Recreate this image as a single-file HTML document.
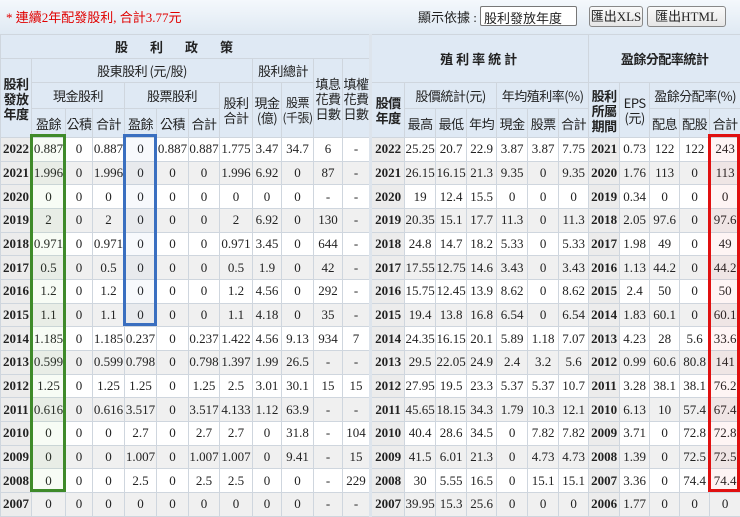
<!DOCTYPE html>
<html><head><meta charset="utf-8">
<style>
*{margin:0;padding:0;box-sizing:border-box}
body{width:740px;height:513px;overflow:hidden;background:#e4edf6;font-family:"Liberation Serif","Noto Sans CJK TC",serif;font-size:13px;color:#222;position:relative}
.top{position:absolute;left:0;top:0;width:740px;height:34px;background:linear-gradient(#f4f8fc,#dfe9f3)}
.red{position:absolute;left:6px;top:7px;color:#e00000;font-size:13px;font-family:"Liberation Serif","Noto Sans CJK TC",serif}
.lbl{position:absolute;left:418px;top:7px;font-size:13px}
.sel{position:absolute;left:480px;top:6px;width:97px;height:20px;border:1px solid #777;background:#fff;font-size:13px;padding:1px 3px;border-radius:2px}
.btn{position:absolute;top:6px;height:21px;border:1px solid #888;background:linear-gradient(#fafafa,#e6e6e6);border-radius:3px;font-size:13px;text-align:center;line-height:19px}
table{position:absolute;left:0;top:34px;width:740px;border-collapse:collapse;table-layout:fixed}
td,th{border:1px solid #cfd6de;text-align:center;white-space:nowrap;overflow:hidden;padding:0;font-weight:normal}
th{background:#dfe9f4;font-family:"Noto Sans CJK TC","Liberation Serif",sans-serif;font-size:13px;line-height:15px;color:#222;overflow:visible;letter-spacing:-0.5px}
th.b{font-weight:bold}
tbody tr{height:23.67px}
tbody tr td{background:#fff}
tbody tr:nth-child(even) td{background:#f0f0f0}
td.y{font-weight:bold;background:#ececec!important}
.sep{border-left:3px solid #dde4ec}
.box{position:absolute;border:3px solid}
</style></head><body>
<div class="top"></div>
<div class="red">* 連續2年配發股利, 合計3.77元</div>
<div class="lbl">顯示依據 :</div>
<div class="sel">股利發放年度 <span style="font-size:10px">&#8964;</span></div>
<div class="btn" style="left:589px;width:54px">匯出XLS</div>
<div class="btn" style="left:647px;width:79px">匯出HTML</div>
<table>
<colgroup>
<col style="width:31px"><col style="width:34px"><col style="width:27px"><col style="width:32px"><col style="width:32px"><col style="width:32px"><col style="width:31px"><col style="width:33px"><col style="width:29px"><col style="width:32px"><col style="width:29px"><col style="width:28px">
<col style="width:34px"><col style="width:31px"><col style="width:31px"><col style="width:30px"><col style="width:31px"><col style="width:31px"><col style="width:30px"><col style="width:31px"><col style="width:30px"><col style="width:30px"><col style="width:30px"><col style="width:31px">
</colgroup>
<thead>
<tr style="height:24px"><th class="b" colspan="12" style="letter-spacing:22px">股利政策</th><th class="b sep" colspan="7" rowspan="2" style="letter-spacing:3px">殖利率統計</th><th class="b" colspan="5" rowspan="2">盈餘分配率統計</th></tr>
<tr style="height:24px"><th class="b" rowspan="3">股利<br>發放<br>年度</th><th colspan="7">股東股利 (元/股)</th><th colspan="2">股利總計</th><th rowspan="3">填息<br>花費<br>日數</th><th rowspan="3">填權<br>花費<br>日數</th></tr>
<tr style="height:26px"><th colspan="3">現金股利</th><th colspan="3">股票股利</th><th rowspan="2">股利<br>合計</th><th rowspan="2">現金<br>(億)</th><th rowspan="2" style="font-size:12px">股票<br>(千張)</th><th class="b sep" rowspan="2">股價<br>年度</th><th colspan="3">股價統計(元)</th><th colspan="3">年均殖利率(%)</th><th class="b" rowspan="2">股利<br>所屬<br>期間</th><th rowspan="2">EPS<br>(元)</th><th colspan="3">盈餘分配率(%)</th></tr>
<tr style="height:29px"><th>盈餘</th><th>公積</th><th>合計</th><th>盈餘</th><th>公積</th><th>合計</th><th>最高</th><th>最低</th><th>年均</th><th>現金</th><th>股票</th><th>合計</th><th>配息</th><th>配股</th><th>合計</th></tr>
</thead>
<tbody>
<tr><td class="y">2022</td><td>0.887</td><td>0</td><td>0.887</td><td>0</td><td>0.887</td><td>0.887</td><td>1.775</td><td>3.47</td><td>34.7</td><td>6</td><td>-</td><td class="y sep">2022</td><td>25.25</td><td>20.7</td><td>22.9</td><td>3.87</td><td>3.87</td><td>7.75</td><td class="y">2021</td><td>0.73</td><td>122</td><td>122</td><td>243</td></tr>
<tr><td class="y">2021</td><td>1.996</td><td>0</td><td>1.996</td><td>0</td><td>0</td><td>0</td><td>1.996</td><td>6.92</td><td>0</td><td>87</td><td>-</td><td class="y sep">2021</td><td>26.15</td><td>16.15</td><td>21.3</td><td>9.35</td><td>0</td><td>9.35</td><td class="y">2020</td><td>1.76</td><td>113</td><td>0</td><td>113</td></tr>
<tr><td class="y">2020</td><td>0</td><td>0</td><td>0</td><td>0</td><td>0</td><td>0</td><td>0</td><td>0</td><td>0</td><td>-</td><td>-</td><td class="y sep">2020</td><td>19</td><td>12.4</td><td>15.5</td><td>0</td><td>0</td><td>0</td><td class="y">2019</td><td>0.34</td><td>0</td><td>0</td><td>0</td></tr>
<tr><td class="y">2019</td><td>2</td><td>0</td><td>2</td><td>0</td><td>0</td><td>0</td><td>2</td><td>6.92</td><td>0</td><td>130</td><td>-</td><td class="y sep">2019</td><td>20.35</td><td>15.1</td><td>17.7</td><td>11.3</td><td>0</td><td>11.3</td><td class="y">2018</td><td>2.05</td><td>97.6</td><td>0</td><td>97.6</td></tr>
<tr><td class="y">2018</td><td>0.971</td><td>0</td><td>0.971</td><td>0</td><td>0</td><td>0</td><td>0.971</td><td>3.45</td><td>0</td><td>644</td><td>-</td><td class="y sep">2018</td><td>24.8</td><td>14.7</td><td>18.2</td><td>5.33</td><td>0</td><td>5.33</td><td class="y">2017</td><td>1.98</td><td>49</td><td>0</td><td>49</td></tr>
<tr><td class="y">2017</td><td>0.5</td><td>0</td><td>0.5</td><td>0</td><td>0</td><td>0</td><td>0.5</td><td>1.9</td><td>0</td><td>42</td><td>-</td><td class="y sep">2017</td><td>17.55</td><td>12.75</td><td>14.6</td><td>3.43</td><td>0</td><td>3.43</td><td class="y">2016</td><td>1.13</td><td>44.2</td><td>0</td><td>44.2</td></tr>
<tr><td class="y">2016</td><td>1.2</td><td>0</td><td>1.2</td><td>0</td><td>0</td><td>0</td><td>1.2</td><td>4.56</td><td>0</td><td>292</td><td>-</td><td class="y sep">2016</td><td>15.75</td><td>12.45</td><td>13.9</td><td>8.62</td><td>0</td><td>8.62</td><td class="y">2015</td><td>2.4</td><td>50</td><td>0</td><td>50</td></tr>
<tr><td class="y">2015</td><td>1.1</td><td>0</td><td>1.1</td><td>0</td><td>0</td><td>0</td><td>1.1</td><td>4.18</td><td>0</td><td>35</td><td>-</td><td class="y sep">2015</td><td>19.4</td><td>13.8</td><td>16.8</td><td>6.54</td><td>0</td><td>6.54</td><td class="y">2014</td><td>1.83</td><td>60.1</td><td>0</td><td>60.1</td></tr>
<tr><td class="y">2014</td><td>1.185</td><td>0</td><td>1.185</td><td>0.237</td><td>0</td><td>0.237</td><td>1.422</td><td>4.56</td><td>9.13</td><td>934</td><td>7</td><td class="y sep">2014</td><td>24.35</td><td>16.15</td><td>20.1</td><td>5.89</td><td>1.18</td><td>7.07</td><td class="y">2013</td><td>4.23</td><td>28</td><td>5.6</td><td>33.6</td></tr>
<tr><td class="y">2013</td><td>0.599</td><td>0</td><td>0.599</td><td>0.798</td><td>0</td><td>0.798</td><td>1.397</td><td>1.99</td><td>26.5</td><td>-</td><td>-</td><td class="y sep">2013</td><td>29.5</td><td>22.05</td><td>24.9</td><td>2.4</td><td>3.2</td><td>5.6</td><td class="y">2012</td><td>0.99</td><td>60.6</td><td>80.8</td><td>141</td></tr>
<tr><td class="y">2012</td><td>1.25</td><td>0</td><td>1.25</td><td>1.25</td><td>0</td><td>1.25</td><td>2.5</td><td>3.01</td><td>30.1</td><td>15</td><td>15</td><td class="y sep">2012</td><td>27.95</td><td>19.5</td><td>23.3</td><td>5.37</td><td>5.37</td><td>10.7</td><td class="y">2011</td><td>3.28</td><td>38.1</td><td>38.1</td><td>76.2</td></tr>
<tr><td class="y">2011</td><td>0.616</td><td>0</td><td>0.616</td><td>3.517</td><td>0</td><td>3.517</td><td>4.133</td><td>1.12</td><td>63.9</td><td>-</td><td>-</td><td class="y sep">2011</td><td>45.65</td><td>18.15</td><td>34.3</td><td>1.79</td><td>10.3</td><td>12.1</td><td class="y">2010</td><td>6.13</td><td>10</td><td>57.4</td><td>67.4</td></tr>
<tr><td class="y">2010</td><td>0</td><td>0</td><td>0</td><td>2.7</td><td>0</td><td>2.7</td><td>2.7</td><td>0</td><td>31.8</td><td>-</td><td>104</td><td class="y sep">2010</td><td>40.4</td><td>28.6</td><td>34.5</td><td>0</td><td>7.82</td><td>7.82</td><td class="y">2009</td><td>3.71</td><td>0</td><td>72.8</td><td>72.8</td></tr>
<tr><td class="y">2009</td><td>0</td><td>0</td><td>0</td><td>1.007</td><td>0</td><td>1.007</td><td>1.007</td><td>0</td><td>9.41</td><td>-</td><td>15</td><td class="y sep">2009</td><td>41.5</td><td>6.01</td><td>21.3</td><td>0</td><td>4.73</td><td>4.73</td><td class="y">2008</td><td>1.39</td><td>0</td><td>72.5</td><td>72.5</td></tr>
<tr><td class="y">2008</td><td>0</td><td>0</td><td>0</td><td>2.5</td><td>0</td><td>2.5</td><td>2.5</td><td>0</td><td>0</td><td>-</td><td>229</td><td class="y sep">2008</td><td>30</td><td>5.55</td><td>16.5</td><td>0</td><td>15.1</td><td>15.1</td><td class="y">2007</td><td>3.36</td><td>0</td><td>74.4</td><td>74.4</td></tr>
<tr><td class="y">2007</td><td>0</td><td>0</td><td>0</td><td>0</td><td>0</td><td>0</td><td>0</td><td>0</td><td>0</td><td>-</td><td>-</td><td class="y sep">2007</td><td>39.95</td><td>15.3</td><td>25.6</td><td>0</td><td>0</td><td>0</td><td class="y">2006</td><td>1.77</td><td>0</td><td>0</td><td>0</td></tr>
</tbody>
</table>
<div class="box" style="left:30px;top:134px;width:36px;height:358px;border-color:#3f8a2a;background:rgba(120,200,90,0.06)"></div>
<div class="box" style="left:123px;top:134px;width:34px;height:192px;border-color:#3a6fc0;background:rgba(90,130,200,0.05)"></div>
<div class="box" style="left:708px;top:134px;width:32px;height:358px;border-color:#e01010;background:rgba(230,60,60,0.06)"></div>
</body></html>
